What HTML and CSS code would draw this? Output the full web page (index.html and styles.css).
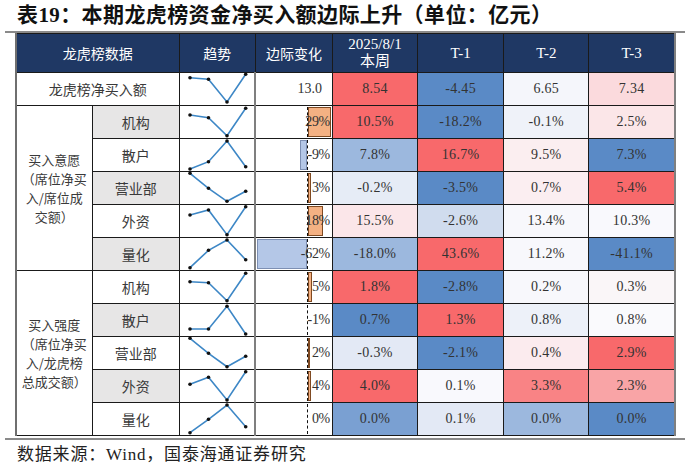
FILE: index.html
```html
<!DOCTYPE html>
<html lang="zh-CN">
<head>
<meta charset="utf-8">
<link rel="stylesheet" href="styles.css">
</head>
<body>
<div class="page">
  <h1 class="title">表19：本期龙虎榜资金净买入额边际上升（单位：亿元）</h1>
  <div class="rule"></div>
  <table class="tbl">
    <colgroup>
      <col class="c1"><col class="c2"><col class="c3"><col class="c4"><col class="c5"><col class="c6"><col class="c7"><col class="c8">
    </colgroup>
    <thead>
      <tr class="hdr">
        <th colspan="2">龙虎榜数据</th>
        <th>趋势</th>
        <th>边际变化</th>
        <th class="num-h">2025/8/1<br>本周</th>
        <th class="num-h">T-1</th>
        <th class="num-h">T-2</th>
        <th class="num-h">T-3</th>
      </tr>
    </thead>
    <tbody>
      <tr>
        <td colspan="2" class="lbl">龙虎榜净买入额</td>
        <td class="sp"><svg viewBox="0 0 76 32" width="76" height="32"><polyline points="10,4.7 28.5,6.3 47,29 65.7,1.3"/><circle cx="10" cy="4.7" r="1.8"/><circle cx="28.5" cy="6.3" r="1.8"/><circle cx="47" cy="29" r="1.8"/><circle cx="65.7" cy="1.3" r="1.8"/></svg></td>
        <td class="mc total">13.0</td>
        <td class="v" style="background:#f8696b">8.54</td>
        <td class="v" style="background:#5a8ac6">-4.45</td>
        <td class="v" style="background:#f5f6fb">6.65</td>
        <td class="v" style="background:#fbdadd">7.34</td>
      </tr>
      <tr>
        <td rowspan="5" class="grp"><span class="gl">买入意愿</span><span class="gl">（席位净买</span><span class="gl">入/席位成</span><span class="gl">交额）</span></td>
        <td class="sub alt">机构</td>
        <td class="sp"><svg viewBox="0 0 76 32" width="76" height="32"><polyline points="10,9 28.5,11.7 47,29.7 65.7,2.3"/><circle cx="10" cy="9" r="1.8"/><circle cx="28.5" cy="11.7" r="1.8"/><circle cx="47" cy="29.7" r="1.8"/><circle cx="65.7" cy="2.3" r="1.8"/></svg></td>
        <td class="mc"><div class="mc-in"><div class="bars"><div class="neg"></div><div class="pos"><i class="bp" style="width:23px"></i></div></div><span class="mv">29%</span></div></td>
        <td class="v" style="background:#f8696b">10.5%</td>
        <td class="v" style="background:#5a8ac6">-18.2%</td>
        <td class="v" style="background:#eff2f9">-0.1%</td>
        <td class="v" style="background:#fbe6e8">2.5%</td>
      </tr>
      <tr>
        <td class="sub">散户</td>
        <td class="sp"><svg viewBox="0 0 76 32" width="76" height="32"><polyline points="10,30 28.5,22.7 47,2 65.7,27.7"/><circle cx="10" cy="30" r="1.8"/><circle cx="28.5" cy="22.7" r="1.8"/><circle cx="47" cy="2" r="1.8"/><circle cx="65.7" cy="27.7" r="1.8"/></svg></td>
        <td class="mc"><div class="mc-in"><div class="bars"><div class="neg"><i class="bn" style="width:7px"></i></div><div class="pos"></div></div><span class="mv">-9%</span></div></td>
        <td class="v" style="background:#9cb8de">7.8%</td>
        <td class="v" style="background:#f8696b">16.7%</td>
        <td class="v" style="background:#fbeef0">9.5%</td>
        <td class="v" style="background:#5a8ac6">7.3%</td>
      </tr>
      <tr>
        <td class="sub alt">营业部</td>
        <td class="sp"><svg viewBox="0 0 76 32" width="76" height="32"><polyline points="10,1.3 28.5,16.3 47,29.3 65.7,19.3"/><circle cx="10" cy="1.3" r="1.8"/><circle cx="28.5" cy="16.3" r="1.8"/><circle cx="47" cy="29.3" r="1.8"/><circle cx="65.7" cy="19.3" r="1.8"/></svg></td>
        <td class="mc"><div class="mc-in"><div class="bars"><div class="neg"></div><div class="pos"><i class="bp" style="width:3px"></i></div></div><span class="mv">3%</span></div></td>
        <td class="v" style="background:#e6ecf6">-0.2%</td>
        <td class="v" style="background:#5a8ac6">-3.5%</td>
        <td class="v" style="background:#fbeef1">0.7%</td>
        <td class="v" style="background:#f8696b">5.4%</td>
      </tr>
      <tr>
        <td class="sub">外资</td>
        <td class="sp"><svg viewBox="0 0 76 32" width="76" height="32"><polyline points="10,10 28.5,5 47,29.7 65.7,1.7"/><circle cx="10" cy="10" r="1.8"/><circle cx="28.5" cy="5" r="1.8"/><circle cx="47" cy="29.7" r="1.8"/><circle cx="65.7" cy="1.7" r="1.8"/></svg></td>
        <td class="mc"><div class="mc-in"><div class="bars"><div class="neg"></div><div class="pos"><i class="bp" style="width:15px"></i></div></div><span class="mv">18%</span></div></td>
        <td class="v" style="background:#fbe6e9">15.5%</td>
        <td class="v" style="background:#d0dcee">-2.6%</td>
        <td class="v" style="background:#f8f8fc">13.4%</td>
        <td class="v" style="background:#f9f9fd">10.3%</td>
      </tr>
      <tr>
        <td class="sub alt">量化</td>
        <td class="sp"><svg viewBox="0 0 76 32" width="76" height="32"><polyline points="10,29.7 28.5,12.3 47,2 65.7,21.7"/><circle cx="10" cy="29.7" r="1.8"/><circle cx="28.5" cy="12.3" r="1.8"/><circle cx="47" cy="2" r="1.8"/><circle cx="65.7" cy="21.7" r="1.8"/></svg></td>
        <td class="mc"><div class="mc-in"><div class="bars"><div class="neg"><i class="bn" style="width:50px"></i></div><div class="pos"></div></div><span class="mv">-62%</span></div></td>
        <td class="v" style="background:#9cb8de">-18.0%</td>
        <td class="v" style="background:#f8696b">43.6%</td>
        <td class="v" style="background:#f8f8fc">11.2%</td>
        <td class="v" style="background:#5a8ac6">-41.1%</td>
      </tr>
      <tr>
        <td rowspan="5" class="grp"><span class="gl">买入强度</span><span class="gl">（席位净买</span><span class="gl">入/龙虎榜</span><span class="gl">总成交额）</span></td>
        <td class="sub">机构</td>
        <td class="sp"><svg viewBox="0 0 76 32" width="76" height="32"><polyline points="10,10.7 28.5,11.7 47,29.7 65.7,2.3"/><circle cx="10" cy="10.7" r="1.8"/><circle cx="28.5" cy="11.7" r="1.8"/><circle cx="47" cy="29.7" r="1.8"/><circle cx="65.7" cy="2.3" r="1.8"/></svg></td>
        <td class="mc"><div class="mc-in"><div class="bars"><div class="neg"></div><div class="pos"><i class="bp" style="width:4px"></i></div></div><span class="mv">5%</span></div></td>
        <td class="v" style="background:#f8696b">1.8%</td>
        <td class="v" style="background:#5a8ac6">-2.8%</td>
        <td class="v" style="background:#f8f8fc">0.2%</td>
        <td class="v" style="background:#faf6f8">0.3%</td>
      </tr>
      <tr>
        <td class="sub alt">散户</td>
        <td class="sp"><svg viewBox="0 0 76 32" width="76" height="32"><polyline points="10,25 28.5,25 47,2.3 65.7,30"/><circle cx="10" cy="25" r="1.8"/><circle cx="28.5" cy="25" r="1.8"/><circle cx="47" cy="2.3" r="1.8"/><circle cx="65.7" cy="30" r="1.8"/></svg></td>
        <td class="mc"><div class="mc-in"><div class="bars"><div class="neg"></div><div class="pos"></div></div><span class="mv">-1%</span></div></td>
        <td class="v" style="background:#5a8ac6">0.7%</td>
        <td class="v" style="background:#f8696b">1.3%</td>
        <td class="v" style="background:#edf1f9">0.8%</td>
        <td class="v" style="background:#fafafd">0.8%</td>
      </tr>
      <tr>
        <td class="sub">营业部</td>
        <td class="sp"><svg viewBox="0 0 76 32" width="76" height="32"><polyline points="10,1.3 28.5,16.3 47,29.7 65.7,19.3"/><circle cx="10" cy="1.3" r="1.8"/><circle cx="28.5" cy="16.3" r="1.8"/><circle cx="47" cy="29.7" r="1.8"/><circle cx="65.7" cy="19.3" r="1.8"/></svg></td>
        <td class="mc"><div class="mc-in"><div class="bars"><div class="neg"></div><div class="pos"><i class="bp thin" style="width:2px"></i></div></div><span class="mv">2%</span></div></td>
        <td class="v" style="background:#e3e9f5">-0.3%</td>
        <td class="v" style="background:#5a8ac6">-2.1%</td>
        <td class="v" style="background:#fbebee">0.4%</td>
        <td class="v" style="background:#f8696b">2.9%</td>
      </tr>
      <tr>
        <td class="sub alt">外资</td>
        <td class="sp"><svg viewBox="0 0 76 32" width="76" height="32"><polyline points="10,14.3 28.5,7.3 47,30 65.7,1.7"/><circle cx="10" cy="14.3" r="1.8"/><circle cx="28.5" cy="7.3" r="1.8"/><circle cx="47" cy="30" r="1.8"/><circle cx="65.7" cy="1.7" r="1.8"/></svg></td>
        <td class="mc"><div class="mc-in"><div class="bars"><div class="neg"></div><div class="pos"><i class="bp" style="width:3px"></i></div></div><span class="mv">4%</span></div></td>
        <td class="v" style="background:#f8696b">4.0%</td>
        <td class="v" style="background:#f9f9fd">0.1%</td>
        <td class="v" style="background:#f98385">3.3%</td>
        <td class="v" style="background:#f9a4a6">2.3%</td>
      </tr>
      <tr>
        <td class="sub">量化</td>
        <td class="sp"><svg viewBox="0 0 76 32" width="76" height="32"><polyline points="10,29.7 28.5,16.3 47,2 65.7,23.7"/><circle cx="10" cy="29.7" r="1.8"/><circle cx="28.5" cy="16.3" r="1.8"/><circle cx="47" cy="2" r="1.8"/><circle cx="65.7" cy="23.7" r="1.8"/></svg></td>
        <td class="mc"><div class="mc-in"><div class="bars"><div class="neg"></div><div class="pos"></div></div><span class="mv">0%</span></div></td>
        <td class="v" style="background:#7aa0d2">0.0%</td>
        <td class="v" style="background:#e3e9f5">0.1%</td>
        <td class="v" style="background:#9cb8de">0.0%</td>
        <td class="v" style="background:#5a8ac6">0.0%</td>
      </tr>
    </tbody>
  </table>
  <div class="rule bottom"></div>
  <p class="note">数据来源：Wind，国泰海通证券研究</p>
</div>
</body>
</html>
```

FILE: styles.css
```css
html, body {
  margin: 0;
  padding: 0;
  background: #ffffff;
}

body {
  font-family: "Liberation Serif", "Noto Sans CJK SC", serif;
  color: #333333;
}

.page {
  width: 680px;
  padding-left: 5px;
}

.title {
  margin: 0;
  height: 31px;
  line-height: 30px;
  padding-left: 12px;
  font-size: 21px;
  font-weight: bold;
  color: #111111;
  letter-spacing: 0.4px;
  white-space: nowrap;
}

.rule {
  height: 2px;
  background: #8a8a8a;
}

.rule.bottom {
  margin-top: 2px;
}

.tbl {
  margin-left: 10px;
  border-collapse: collapse;
  table-layout: fixed;
  width: 661px;
  border-left: 2px solid #6f6f6f;
  border-right: 2px solid #7f7f7f;
}

.c1 { width: 76px; }
.c2 { width: 87px; }
.c3 { width: 76px; }
.c4 { width: 77px; }
.c5 { width: 85px; }
.c6 { width: 86px; }
.c7 { width: 85px; }
.c8 { width: 86px; }

.tbl th,
.tbl td {
  border: 1px solid #1a1a1a;
  padding: 0;
  text-align: center;
  vertical-align: middle;
  overflow: visible;
}

.hdr {
  height: 39px;
}

.hdr th {
  background: #1f3864;
  color: #ffffff;
  font-family: "Noto Sans CJK SC", sans-serif;
  font-weight: normal;
  font-size: 14px;
  line-height: 17px;
}

.hdr th.num-h {
  font-family: "Liberation Serif", "Noto Sans CJK SC", serif;
  font-size: 15px;
}

.tbl tbody tr {
  height: 33px;
}

.lbl,
.sub,
.grp {
  font-family: "Noto Sans CJK SC", sans-serif;
  font-size: 14px;
  color: #3a3a3a;
}

.grp {
  background: #ffffff;
  font-size: 13px;
}

.gl {
  display: block;
  height: 19px;
  line-height: 19px;
  white-space: nowrap;
}

.sub.alt {
  background: #e7e6e6;
}

.sp svg {
  display: block;
  overflow: visible;
}

.sp polyline {
  fill: none;
  stroke: #3d87c6;
  stroke-width: 1.6;
}

.sp circle {
  fill: #111111;
}

.mc {
  border-left: 2px solid #7f7f7f !important;
  font-size: 14px;
}

.mc.total {
  text-align: right;
  padding-right: 10px;
}

.mc-in {
  display: grid;
  height: 32px;
}

.bars,
.mv {
  grid-area: 1 / 1;
}

.bars {
  display: flex;
  padding: 1px 0;
}

.neg {
  width: 51px;
  display: flex;
  justify-content: flex-end;
  border-right: 1px dashed #111111;
}

.pos {
  flex: 1;
  display: flex;
}

.bn,
.bp {
  display: block;
  box-sizing: border-box;
}

.bn {
  background: #b4c7e7;
  border: 1px solid #7d8fb3;
}

.bp {
  background: #f4b183;
  border: 1px solid #7f4a22;
}

.bp.thin {
  background: #a0613a;
}

.mv {
  align-self: center;
  justify-self: end;
  padding-right: 2px;
  position: relative;
  letter-spacing: -0.3px;
}

.v {
  font-size: 14px;
  color: #333333;
  letter-spacing: 0.3px;
}

.note {
  margin: 0;
  padding-left: 12px;
  height: 28px;
  line-height: 30px;
  font-size: 17px;
  letter-spacing: 0.8px;
  color: #222222;
}
```
